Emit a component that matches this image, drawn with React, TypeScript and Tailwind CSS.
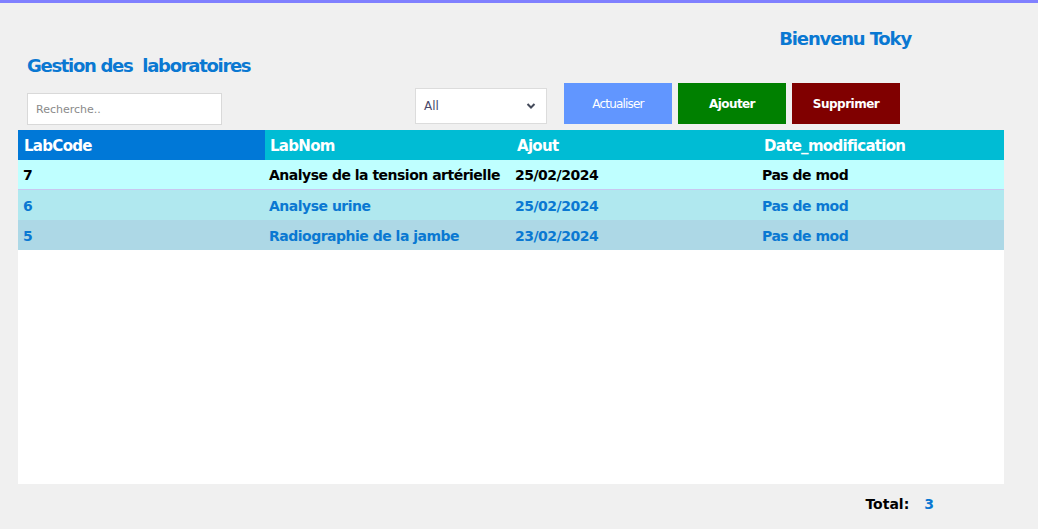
import React from "react";

const rows = [
  { code: "7", nom: "Analyse de la tension artérielle", ajout: "25/02/2024", mod: "Pas de mod", bg: "bg-[#bfffff]", text: "text-black", border: "border-b border-[#c8c8f0]" },
  { code: "6", nom: "Analyse urine", ajout: "25/02/2024", mod: "Pas de mod", bg: "bg-[#b0e8ef]", text: "text-[#0a78d2]", border: "" },
  { code: "5", nom: "Radiographie de la jambe", ajout: "23/02/2024", mod: "Pas de mod", bg: "bg-[#add8e6]", text: "text-[#0a78d2]", border: "" },
];

export default function App() {
  return (
    <div className="w-[1038px] h-[529px] bg-[#f0f0f0] border-t-[3px] border-[#8080ff] font-['DejaVu_Sans',sans-serif] overflow-hidden">
      <div className="flex justify-end pr-[127px] pt-[23px] h-[30px]">
        <span className="text-[18px] font-bold text-[#0a78d2] leading-[26px] tracking-[-1.15px]">Bienvenu Toky</span>
      </div>
      <div className="pl-[27px] pt-[20px] h-[50px]">
        <span className="text-[18px] font-bold text-[#0a78d2] leading-[26px] tracking-[-1.3px] whitespace-pre">Gestion des  laboratoires</span>
      </div>
      <div className="flex items-start h-[47px]">
        <input
          className="ml-[27px] mt-[10px] w-[195px] h-[32px] bg-white border border-[#d9d9d9] px-[8px] text-[11px] outline-none placeholder:text-[#8a8a8a]"
          placeholder="Recherche.."
        />
        <div className="ml-[193px] mt-[5px] w-[132px] h-[36px] bg-white border border-[#dcdcdc] flex items-center justify-between pl-[8px] pr-[10px]">
          <span className="text-[12px] text-[#4a4a6a]">All</span>
          <svg width="10" height="8" viewBox="0 0 10 8">
            <path d="M1.5 2 L5 5.5 L8.5 2" stroke="#444a5a" strokeWidth="2" fill="none" />
          </svg>
        </div>
        <button className="ml-[17px] w-[108px] h-[41px] bg-[#6196ff] text-white text-[12px] tracking-[-0.8px]">Actualiser</button>
        <button className="ml-[6px] w-[108px] h-[41px] bg-[#008000] text-white text-[12px] font-bold tracking-[-0.6px]">Ajouter</button>
        <button className="ml-[6px] w-[108px] h-[41px] bg-[#800000] text-white text-[12px] font-bold tracking-[-0.5px]">Supprimer</button>
      </div>
      <div className="mx-[18px] w-[986px] h-[354px] bg-white">
        <div className="grid grid-cols-[247px_247px_246px_246px] h-[30px] text-white text-[15px] font-bold tracking-[-0.7px]">
          <div className="bg-[#0078d7] pl-[6px] pt-[2px] flex items-center">LabCode</div>
          <div className="bg-[#00bcd4] pl-[5px] pt-[2px] flex items-center">LabNom</div>
          <div className="bg-[#00bcd4] pl-[5px] pt-[2px] flex items-center">Ajout</div>
          <div className="bg-[#00bcd4] pl-[6px] pt-[2px] flex items-center">Date_modification</div>
        </div>
        {rows.map((r) => (
          <div key={r.code} className={`grid grid-cols-[247px_247px_246px_246px] h-[30px] text-[14px] font-bold tracking-[-0.5px] ${r.bg} ${r.text} ${r.border}`}>
            <div className="pl-[5px] pt-[2px] flex items-center">{r.code}</div>
            <div className="pl-[4px] pt-[2px] flex items-center whitespace-nowrap">{r.nom}</div>
            <div className="pl-[3px] pt-[2px] flex items-center">{r.ajout}</div>
            <div className="pl-[4px] pt-[2px] flex items-center">{r.mod}</div>
          </div>
        ))}
      </div>
      <div className="flex justify-end pr-[104px] pt-[10px]">
        <span className="text-[14px] font-bold text-black">Total:</span>
        <span className="ml-[15px] text-[14px] font-bold text-[#0a78d2]">3</span>
      </div>
    </div>
  );
}
